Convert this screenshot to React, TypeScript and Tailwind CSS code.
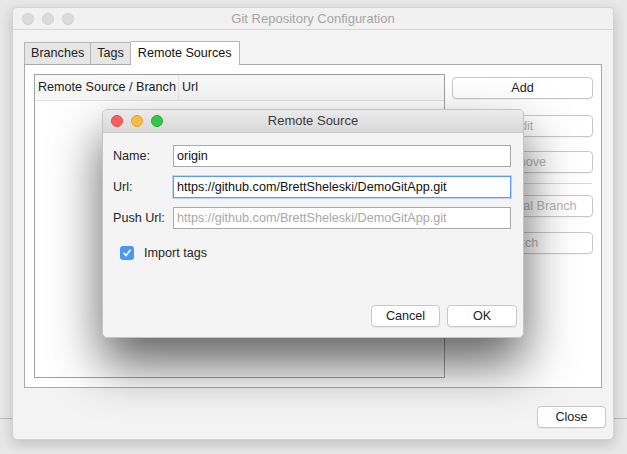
import React from "react";

function Lights({ active }: { active: boolean }) {
  const colors = active
    ? [
        "bg-[#fc605c] border-[#de4a46]",
        "bg-[#fdbc40] border-[#dea236]",
        "bg-[#34c84a] border-[#27aa35]",
      ]
    : [
        "bg-[#dcdcdc] border-[#cfcfcf]",
        "bg-[#dcdcdc] border-[#cfcfcf]",
        "bg-[#dcdcdc] border-[#cfcfcf]",
      ];
  return (
    <div className="flex items-center gap-[8px]">
      {colors.map((c, i) => (
        <span key={i} className={`h-[12px] w-[12px] rounded-full border ${c}`} />
      ))}
    </div>
  );
}

function MacButton({
  children,
  disabled,
  className = "",
}: {
  children: React.ReactNode;
  disabled?: boolean;
  className?: string;
}) {
  return (
    <button
      className={`flex h-[22px] items-center justify-center whitespace-nowrap rounded-[4px] border border-[#c8c8c8] bg-white text-[12.6px] shadow-[0_1px_0_rgba(0,0,0,0.04)] ${
        disabled ? "text-[#b4b4b4]" : "text-[#222]"
      } ${className}`}
    >
      {children}
    </button>
  );
}

function Field({
  label,
  value,
  placeholder,
  focused,
}: {
  label: string;
  value?: string;
  placeholder?: string;
  focused?: boolean;
}) {
  return (
    <div className="flex items-center">
      <div className="w-[60px] whitespace-nowrap text-[12.6px] text-[#262626]">{label}</div>
      <div
        className={`flex h-[22px] w-[338px] items-center whitespace-nowrap bg-white px-[3px] text-[12.6px] ${
          focused
            ? "border border-[#5b9af5] shadow-[0_0_0_1px_rgba(91,154,245,0.35)]"
            : "border border-[#a9a9a9]"
        }`}
      >
        {value ? (
          <span className="text-[#111]">{value}</span>
        ) : (
          <span className="text-[#a8a8a8]">{placeholder}</span>
        )}
      </div>
    </div>
  );
}

export default function App() {
  return (
    <div
      className="relative h-[454px] w-[627px] overflow-hidden bg-[#e8e8e8]"
      style={{ fontFamily: '"Liberation Sans", Arial, sans-serif' }}
    >
      {/* window behind */}
      <div className="absolute left-0 top-[418px] h-px w-full bg-[#bdbdbd]" />

      {/* main window */}
      <div className="absolute left-[12px] top-[7px] flex h-[433px] w-[602px] flex-col overflow-hidden rounded-[5px] border border-[#d2d2d2] bg-[#f3f3f3] shadow-[0_4px_14px_rgba(0,0,0,0.18)]">
        <div className="relative flex h-[22px] shrink-0 items-center border-b border-[#d6d6d6] bg-[#f1f1f1] px-[9px]">
          <Lights active={false} />
          <div className="absolute inset-0 flex items-center justify-center text-[13px] text-[#a6a6a6]">
            Git Repository Configuration
          </div>
        </div>

        <div className="flex flex-1 flex-col px-[11px] pt-[10px]">
          <div className="flex items-end">
            <div className="flex h-[22px] items-center border border-b-0 border-[#b5b5b5] bg-[#e6e6e6] px-[6px] text-[12.6px] text-[#222]">
              Branches
            </div>
            <div className="flex h-[22px] items-center border border-b-0 border-l-0 border-[#b5b5b5] bg-[#e6e6e6] px-[6px] text-[12.6px] text-[#222]">
              Tags
            </div>
            <div className="relative top-px flex h-[24px] items-center border border-b-0 border-l-0 border-[#b5b5b5] bg-white px-[7px] text-[12.6px] text-[#111]">
              Remote Sources
            </div>
          </div>
          <div className="flex h-[324px] border border-[#a9a9a9] bg-white p-[9px] pr-[8px]">
            <div className="flex w-[411px] flex-col border border-[#a0a0a0]">
              <div className="flex h-[26px] items-center whitespace-nowrap border-b border-[#e2e2e2] bg-[#f7f7f7] text-[12.6px] text-[#222]">
                <div className="flex h-full w-[144px] items-center border-r border-[#e2e2e2] pl-[3px]">
                  Remote Source / Branch
                </div>
                <div className="pl-[3px]">Url</div>
              </div>
              <div className="flex-1 bg-white" />
            </div>
            <div className="ml-[7px] flex flex-1 flex-col pt-[3px]">
              <MacButton>Add</MacButton>
              <MacButton disabled className="mt-[16px]">
                Edit
              </MacButton>
              <MacButton disabled className="mt-[14px]">
                Remove
              </MacButton>
              <div className="mx-[1px] mt-[10px] h-px bg-[#d8d8d8]" />
              <MacButton disabled className="mt-[11px]">
                Track Local Branch
              </MacButton>
              <MacButton disabled className="mt-[15px]">
                Fetch
              </MacButton>
            </div>
          </div>
          <div className="flex justify-end pt-[18px]">
            <MacButton className="mr-[-4px] w-[69px]">Close</MacButton>
          </div>
        </div>
      </div>

      {/* modal sheet */}
      <div className="absolute left-[102px] top-[109px] flex h-[229px] w-[422px] flex-col overflow-hidden rounded-[5px] border border-[#c4c4c4] bg-[#f4f4f4] shadow-[0_26px_50px_rgba(0,0,0,0.62)]">
        <div className="relative flex h-[23px] shrink-0 items-center border-b border-[#c9c9c9] bg-gradient-to-b from-[#ebebeb] to-[#d9d9d9] px-[8px]">
          <Lights active />
          <div className="absolute inset-0 flex items-center justify-center text-[13px] text-[#3a3a3a]">
            Remote Source
          </div>
        </div>
        <div className="flex flex-1 flex-col px-[10px] pt-[12px]">
          <div className="flex flex-col gap-[9px]">
            <Field label="Name:" value="origin" />
            <Field
              label="Url:"
              value="https://github.com/BrettSheleski/DemoGitApp.git"
              focused
            />
            <Field
              label="Push Url:"
              placeholder="https://github.com/BrettSheleski/DemoGitApp.git"
            />
          </div>
          <div className="mt-[15px] flex items-center pl-[7px]">
            <span className="flex h-[14px] w-[14px] items-center justify-center rounded-[3px] bg-[#4a97f7]">
              <svg width="10" height="10" viewBox="0 0 10 10">
                <path
                  d="M2 5.2 L4.1 7.6 L8 2.2"
                  fill="none"
                  stroke="white"
                  strokeWidth="1.6"
                  strokeLinecap="round"
                  strokeLinejoin="round"
                />
              </svg>
            </span>
            <span className="ml-[10px] text-[12.6px] text-[#262626]">Import tags</span>
          </div>
          <div className="flex-1" />
          <div className="mb-[10px] flex justify-end gap-[7px]">
            <MacButton className="w-[69px]">Cancel</MacButton>
            <MacButton className="mr-[-4px] w-[70px]">OK</MacButton>
          </div>
        </div>
      </div>
    </div>
  );
}
